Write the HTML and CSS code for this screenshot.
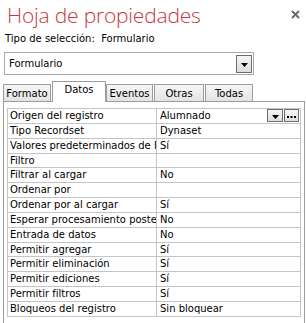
FILE: index.html
```html
<!DOCTYPE html>
<html lang="es">
<head>
<meta charset="utf-8">
<title>Hoja de propiedades</title>
<link rel="stylesheet" href="styles.css">
</head>
<body>
<div class="sheet">
  <header class="head">
    <h1 class="title">Hoja de propiedades</h1>
    <span class="close">
      <svg width="9" height="9" viewBox="0 0 9 9"><path d="M1 1 L8 8 M8 1 L1 8" stroke="#6b6b6b" stroke-width="2" fill="none"/></svg>
    </span>
  </header>
  <div class="seltype">Tipo de selección:&nbsp; Formulario</div>
  <div class="combo">
    <span class="combo-text">Formulario</span>
    <span class="combo-btn"><svg width="7" height="4" viewBox="0 0 7 4"><path d="M0 0 H7 L3.5 4 Z" fill="#000"/></svg></span>
  </div>
  <div class="tabs">
    <span class="tab tab-formato">Formato</span>
    <span class="tab tab-datos active">Datos</span>
    <span class="tab tab-eventos">Eventos</span>
    <span class="tab tab-otras">Otras</span>
    <span class="tab tab-todas">Todas</span>
  </div>
  <div class="panel">
    <div class="grid">
      <div class="row">
        <div class="cell label">Origen del registro</div>
        <div class="cell value value-first">
          <span>Alumnado</span>
          <span class="cell-btns">
            <span class="mini-btn"><svg width="7" height="4" viewBox="0 0 7 4"><path d="M0 0 H7 L3.5 4 Z" fill="#000"/></svg></span>
            <span class="mini-btn dots"><svg width="9" height="2" viewBox="0 0 9 2"><rect x="0" y="0" width="2" height="2" fill="#000"/><rect x="3.5" y="0" width="2" height="2" fill="#000"/><rect x="7" y="0" width="2" height="2" fill="#000"/></svg></span>
          </span>
        </div>
      </div>
      <div class="row"><div class="cell label">Tipo Recordset</div><div class="cell value">Dynaset</div></div>
      <div class="row"><div class="cell label">Valores predeterminados de Filtro</div><div class="cell value">Sí</div></div>
      <div class="row"><div class="cell label">Filtro</div><div class="cell value"></div></div>
      <div class="row"><div class="cell label">Filtrar al cargar</div><div class="cell value">No</div></div>
      <div class="row"><div class="cell label">Ordenar por</div><div class="cell value"></div></div>
      <div class="row"><div class="cell label">Ordenar por al cargar</div><div class="cell value">Sí</div></div>
      <div class="row"><div class="cell label">Esperar procesamiento posterior</div><div class="cell value">No</div></div>
      <div class="row"><div class="cell label">Entrada de datos</div><div class="cell value">No</div></div>
      <div class="row"><div class="cell label">Permitir agregar</div><div class="cell value">Sí</div></div>
      <div class="row"><div class="cell label">Permitir eliminación</div><div class="cell value">Sí</div></div>
      <div class="row"><div class="cell label">Permitir ediciones</div><div class="cell value">Sí</div></div>
      <div class="row"><div class="cell label">Permitir filtros</div><div class="cell value">Sí</div></div>
      <div class="row"><div class="cell label">Bloqueos del registro</div><div class="cell value">Sin bloquear</div></div>
    </div>
  </div>
</div>
</body>
</html>
```

FILE: styles.css
```css
html, body {
  margin: 0;
  padding: 0;
  background: #fff;
}
body {
  font-family: "DejaVu Sans", "Liberation Sans", sans-serif;
  font-size: 10px;
  color: #000;
}
.sheet {
  width: 306px;
  height: 323px;
  overflow: hidden;
}
.head {
  display: flex;
  justify-content: space-between;
  align-items: flex-start;
  height: 30px;
  padding: 0 6px 0 7px;
}
.title {
  margin: 0;
  font-family: "Open Sans", sans-serif;
  font-weight: 300;
  font-size: 21px;
  line-height: 31px;
  letter-spacing: -0.2px;
  color: #c8363e;
}
.close {
  display: block;
  width: 9px;
  height: 9px;
  margin-top: 10px;
}
.close svg { display: block; }
.seltype {
  padding-left: 5px;
  height: 16px;
  line-height: 16px;
  margin-top: 1px;
}
.combo {
  box-sizing: border-box;
  margin: 5px 0 0 4px;
  width: 250px;
  height: 23px;
  border: 1px solid #a8a8a8;
  display: flex;
  align-items: center;
  justify-content: space-between;
  padding: 0 1px 0 4px;
}
.combo-btn {
  box-sizing: border-box;
  width: 16px;
  height: 18px;
  border: 1px solid #6e6e6e;
  background: linear-gradient(#f6f6f6, #dcdcdc);
  display: flex;
  align-items: center;
  justify-content: center;
  padding-top: 2px;
}
.combo-btn svg { display: block; }
.tabs {
  display: flex;
  align-items: flex-end;
  margin: 5px 0 0 3px;
  height: 21px;
  position: relative;
  z-index: 1;
}
.tab {
  box-sizing: border-box;
  height: 17px;
  border: 1px solid #9c9c9c;
  border-bottom: none;
  background: linear-gradient(#f7f7f7, #e3e3e3);
  text-align: center;
  line-height: 17px;
  white-space: nowrap;
}
.tab-formato { width: 48px; }
.tab-datos { width: 54px; margin-left: 1px; }
.tab-eventos { width: 47px; }
.tab-otras { width: 50px; margin-left: 1px; }
.tab-todas { width: 48px; margin-left: 1px; }
.tab.active {
  height: 21px;
  background: #fff;
  line-height: 15px;
  margin-bottom: -1px;
}
.panel {
  box-sizing: border-box;
  margin-left: 3px;
  width: 302px;
  height: 240px;
  border: 1px solid #9c9c9c;
  padding: 6px 3px 0 3px;
}
.grid {
  border-top: 1px solid #c4c4c4;
  border-left: 1px solid #c4c4c4;
  width: 294px;
  box-sizing: border-box;
}
.row {
  display: grid;
  grid-template-columns: 149px 1fr;
  height: 14.85px;
}
.cell {
  border-right: 1px solid #c4c4c4;
  border-bottom: 1px solid #c4c4c4;
  white-space: nowrap;
  overflow: hidden;
  line-height: 13.85px;
}
.label { padding-left: 2px; }
.value { padding-left: 3px; }
.value-first {
  display: flex;
  justify-content: space-between;
  align-items: center;
}
.cell-btns {
  display: flex;
  gap: 1px;
  padding-right: 1px;
}
.mini-btn {
  box-sizing: border-box;
  width: 16px;
  height: 13px;
  border: 1px solid #6e6e6e;
  background: linear-gradient(#f8f8f8, #dddddd);
  display: flex;
  align-items: flex-end;
  justify-content: center;
  padding-bottom: 2px;
}
.mini-btn.dots {
  width: 15px;
  align-items: center;
  padding: 2px 0 0 0;
}
.mini-btn svg { display: block; }
```
